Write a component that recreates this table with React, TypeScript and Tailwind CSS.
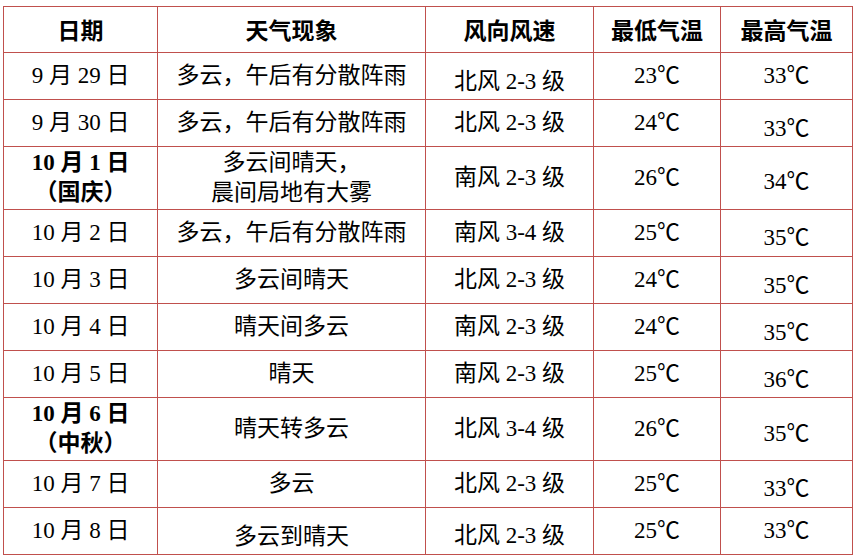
const body = "font-['Liberation_Serif','Noto_Sans_CJK_SC',serif]";

type Row = {
  date: string[];
  bold?: boolean;
  weather: string[];
  wind: string;
  low: string;
  high: string;
  tall?: boolean;
  // small vertical nudges, as in the source document
  wOff?: string;
  windOff?: string;
  highOff?: string;
};

const rows: Row[] = [
  { date: ["9 月 29 日"], weather: ["多云，午后有分散阵雨"], wind: "北风 2-3 级", low: "23℃", high: "33℃", windOff: "pt-[12px]" },
  { date: ["9 月 30 日"], weather: ["多云，午后有分散阵雨"], wind: "北风 2-3 级", low: "24℃", high: "33℃", highOff: "pt-[12px]" },
  { date: ["10 月 1 日", "（国庆）"], bold: true, tall: true, weather: ["多云间晴天，", "晨间局地有大雾"], wind: "南风 2-3 级", low: "26℃", high: "34℃", highOff: "pt-[8px]" },
  { date: ["10 月 2 日"], weather: ["多云，午后有分散阵雨"], wind: "南风 3-4 级", low: "25℃", high: "35℃", highOff: "pt-[10px]" },
  { date: ["10 月 3 日"], weather: ["多云间晴天"], wind: "北风 2-3 级", low: "24℃", high: "35℃", highOff: "pt-[12px]" },
  { date: ["10 月 4 日"], weather: ["晴天间多云"], wind: "南风 2-3 级", low: "24℃", high: "35℃", highOff: "pt-[12px]" },
  { date: ["10 月 5 日"], weather: ["晴天"], wind: "南风 2-3 级", low: "25℃", high: "36℃", highOff: "pt-[12px]" },
  { date: ["10 月 6 日", "（中秋）"], bold: true, tall: true, weather: ["晴天转多云"], wind: "北风 3-4 级", low: "26℃", high: "35℃", highOff: "pt-[10px]" },
  { date: ["10 月 7 日"], weather: ["多云"], wind: "北风 2-3 级", low: "25℃", high: "33℃", highOff: "pt-[10px]" },
  { date: ["10 月 8 日"], weather: ["多云到晴天"], wind: "北风 2-3 级", low: "25℃", high: "33℃", wOff: "pt-[12px]", windOff: "pt-[10px]" },
];

const cell = "border border-[#c0504d] text-center align-middle p-0";

export default function App() {
  return (
    <div className="w-[855px] h-[556px] bg-white pt-[6px] pl-[3px]">
      <table className="table-fixed border-collapse w-[849px] text-black">
        <colgroup>
          <col className="w-[154px]" />
          <col className="w-[268px]" />
          <col className="w-[168px]" />
          <col className="w-[127px]" />
          <col className="w-[132px]" />
        </colgroup>
        <thead>
          <tr className="h-[46px] font-['Noto_Sans_CJK_SC',sans-serif] font-bold text-[23px]">
            <th className={cell}>日期</th>
            <th className={cell}>天气现象</th>
            <th className={cell}>风向风速</th>
            <th className={cell}>最低气温</th>
            <th className={cell}>最高气温</th>
          </tr>
        </thead>
        <tbody className={`${body} text-[23px] leading-[30px]`}>
          {rows.map((r, i) => (
            <tr key={i} className={r.tall ? "h-[63px]" : "h-[47px]"}>
              <td className={`${cell} ${r.bold ? "font-bold font-['Liberation_Serif','Noto_Sans_CJK_SC',sans-serif]" : ""}`}>
                {r.date.map((d) => (
                  <div key={d} className="whitespace-pre">{d}</div>
                ))}
              </td>
              <td className={`${cell} ${r.wOff ?? ""}`}>
                {r.weather.map((w) => (
                  <div key={w}>{w}</div>
                ))}
              </td>
              <td className={`${cell} ${r.windOff ?? ""}`}>{r.wind}</td>
              <td className={cell}>{r.low}</td>
              <td className={`${cell} ${r.highOff ?? ""}`}>{r.high}</td>
            </tr>
          ))}
        </tbody>
      </table>
    </div>
  );
}
